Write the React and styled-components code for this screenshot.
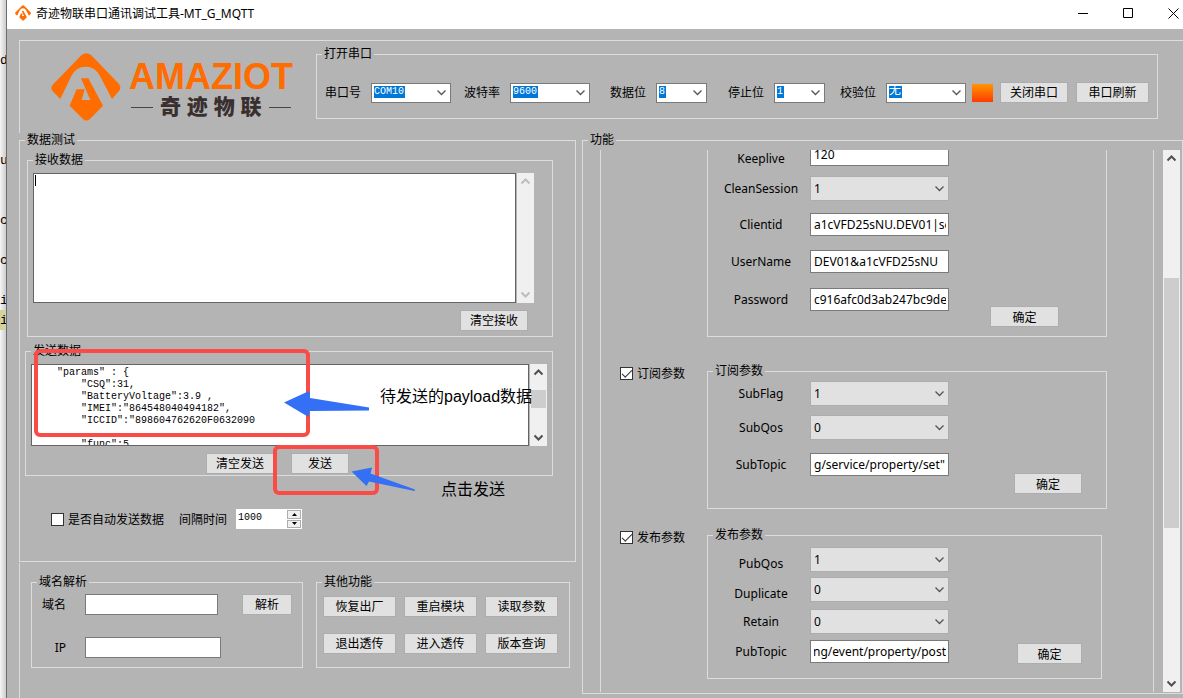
import React, { useEffect, useRef, useState } from "react";
import styled, { createGlobalStyle } from "styled-components";

const portFields = [
  { id: "com", label: "串口号", value: "COM10", width: 80, mark: 31, gap: 0 },
  { id: "baud", label: "波特率", value: "9600", width: 80, mark: 25, gap: 13 },
  { id: "bits", label: "数据位", value: "8", width: 51, mark: 7, gap: 20 },
  { id: "stop", label: "停止位", value: "1", width: 51, mark: 7, gap: 21 },
  { id: "parity", label: "校验位", value: "无", width: 80, mark: 13, gap: 15, size: 12 },
];

const otherButtons = ["恢复出厂", "重启模块", "读取参数", "退出透传", "进入透传", "版本查询"];

const mqttRows = [
  { label: "Keeplive", value: "120", gap: 0, low: true },
  { label: "CleanSession", value: "1", select: true, gap: 10 },
  { label: "Clientid", value: "a1cVFD25sNU.DEV01|se", gap: 12 },
  { label: "UserName", value: "DEV01&a1cVFD25sNU", gap: 14 },
  { label: "Password", value: "c916afc0d3ab247bc9de", gap: 15 },
];

const subRows = [
  { label: "SubFlag", value: "1", select: true, gap: 2 },
  { label: "SubQos", value: "0", select: true, gap: 9 },
  { label: "SubTopic", value: 'g/service/property/set"', end: true, gap: 13 },
];

const pubRows = [
  { label: "PubQos", value: "1", select: true, gap: 4, low: true },
  { label: "Duplicate", value: "0", select: true, gap: 5, low: true },
  { label: "Retain", value: "0", select: true, gap: 7 },
  { label: "PubTopic", value: "ng/event/property/post", end: true, gap: 6 },
];

const payload = `    "params" : {
        "CSQ":31,
        "BatteryVoltage":3.9 ,
        "IMEI":"864548040494182",
        "ICCID":"898604762620F0632090

        "func":5`;

//창 뒤에 보이는 에디터 글자
const editorLines = ["d", "", "", "", "", "u", "", "", "c", "", "c", "", "i", "i"];

function Mark({ size }) {
  return (
    <svg width={size} height={size} viewBox="152 156 210 206" fill="#ff6c00" aria-hidden="true">
      <path d="M244 163Q258 153 272 163L356 250Q364 262 356 271L335 295L299 226Q285 198 256 198Q227 198 213 226L180 295L157 272Q149 262 157 252Z" />
      <path d="M242 233H264L308 315L269 355Q258 364 248 355L208 315L229 266H253L244 298H270Z" />
    </svg>
  );
}

function Chevron({ up, size = 11, color = "#555", width = 1.3 }) {
  return (
    <svg width={size} height={size} viewBox="0 0 11 11" fill="none" stroke={color} strokeWidth={width} aria-hidden="true">
      <path d={up ? "M1.5 7.5L5.5 3.5L9.5 7.5" : "M1.5 3.5L5.5 7.5L9.5 3.5"} />
    </svg>
  );
}

function ScrollBar({ before, thumb, disabled }) {
  const color = disabled ? "#bdbdbd" : "#505050";
  return (
    <Track>
      <Chevron up color={color} width={2} />
      {thumb && <Thumb $top={before} $height={thumb} />}
      <Chevron color={color} width={2} />
    </Track>
  );
}

function Row({ row }) {
  const id = `f-${row.label}`;
  const ref = useRef(null);
  const [value, setValue] = useState(row.value);

  //긴 토픽은 끝부분이 보이게
  useEffect(() => {
    if (row.end && ref.current) {
      ref.current.scrollLeft = ref.current.scrollWidth;
    }
  }, [row.end]);

  return (
    <FieldRow $gap={row.gap} $low={row.low}>
      <label htmlFor={id}>{row.label}</label>
      {row.select ? (
        <SelectWrap>
          <GraySelect id={id} value={value} onChange={(e) => setValue(e.target.value)}>
            <option>0</option>
            <option>1</option>
          </GraySelect>
          <Chevron />
        </SelectWrap>
      ) : (
        <ParamInput id={id} ref={ref} value={value} onChange={(e) => setValue(e.target.value)} />
      )}
    </FieldRow>
  );
}

function App() {
  const [send, setSend] = useState(payload);
  const [receive, setReceive] = useState("");
  const [time, setTime] = useState(1000);

  return (
    <Screen>
      <GlobalStyle />
      <Editor aria-hidden="true">
        {editorLines.map((line, i) => (
          <EditorLine key={i} $on={i === editorLines.length - 1}>
            {line}
          </EditorLine>
        ))}
      </Editor>
      <Window>
        <TitleBar>
          <Mark size={16} />
          <h1>奇迹物联串口通讯调试工具-MT_G_MQTT</h1>
          <WinButton aria-label="minimize">
            <svg width="11" height="11" viewBox="0 0 11 11" stroke="#000"><path d="M0 5.5H10" /></svg>
          </WinButton>
          <WinButton aria-label="maximize">
            <svg width="11" height="11" viewBox="0 0 11 11" stroke="#000" fill="none"><path d="M.5 .5H9.5V9.5H.5Z" /></svg>
          </WinButton>
          <WinButton aria-label="close">
            <svg width="11" height="11" viewBox="0 0 11 11" stroke="#000"><path d="M.5 .5L10.5 10.5M10.5 .5L.5 10.5" /></svg>
          </WinButton>
        </TitleBar>
        <Client>
          <Header>
            <Logo>
              <Mark size={70} />
              <div>
                <Brand>AMAZIOT</Brand>
                <BrandSub>奇 迹 物 联</BrandSub>
              </div>
            </Logo>
            <PortGroup>
              <legend>打开串口</legend>
              <PortRow>
                {portFields.map((f) => (
                  <PortField key={f.id} $gap={f.gap}>
                    <label htmlFor={f.id}>{f.label}</label>
                    <SelectWrap>
                      <PortSelect id={f.id} $width={f.width} $mark={f.mark} $size={f.size}>
                        <option>{f.value}</option>
                      </PortSelect>
                      <Chevron />
                    </SelectWrap>
                  </PortField>
                ))}
                <Led />
                <Button $width={68}>关闭串口</Button>
                <Button $width={73}>串口刷新</Button>
              </PortRow>
            </PortGroup>
          </Header>

          <Body>
            <Left>
              <DataGroup>
                <legend>数据测试</legend>
                <ReceiveGroup>
                  <legend>接收数据</legend>
                  <AreaRow $right={18}>
                    <ReceiveArea
                      aria-label="接收数据"
                      value={receive}
                      onChange={(e) => setReceive(e.target.value)}
                    />
                    <Caret />
                    <ScrollBar disabled />
                  </AreaRow>
                  <ReceiveButtons>
                    <Button $width={68} onClick={() => setReceive("")}>清空接收</Button>
                  </ReceiveButtons>
                </ReceiveGroup>
                <SendGroup>
                  <legend>发送数据</legend>
                  <AreaRow $right={5}>
                    <SendArea
                      aria-label="发送数据"
                      wrap="off"
                      value={send}
                      onChange={(e) => setSend(e.target.value)}
                    />
                    <ScrollBar before={12} thumb={18} />
                  </AreaRow>
                  <SendButtons>
                    <Button $width={68} onClick={() => setSend("")}>清空发送</Button>
                    <Button $width={58}>发送</Button>
                  </SendButtons>
                </SendGroup>
                <AutoRow>
                  <Check>
                    <input type="checkbox" />
                    是否自动发送数据
                  </Check>
                  <label htmlFor="time">间隔时间</label>
                  <Spinner>
                    <input id="time" value={time} onChange={(e) => setTime(Number(e.target.value) || 0)} />
                    <div>
                      <button aria-label="up" onClick={() => setTime(time + 1)}>
                        <svg width="5" height="3" viewBox="0 0 5 3"><path d="M0 3L2.500 0L5 3Z" /></svg>
                      </button>
                      <button aria-label="down" onClick={() => setTime(time - 1)}>
                        <svg width="5" height="3" viewBox="0 0 5 3"><path d="M0 0L2.500 3L5 0Z" /></svg>
                      </button>
                    </div>
                  </Spinner>
                </AutoRow>
              </DataGroup>

              <Bottom>
                <DomainGroup>
                  <legend>域名解析</legend>
                  <DomainRow>
                    <label htmlFor="domain">域名</label>
                    <TextInput id="domain" $width={133} />
                    <Button $width={50}>解析</Button>
                  </DomainRow>
                  <DomainRow>
                    <label htmlFor="ip">IP</label>
                    <TextInput id="ip" $width={136} />
                  </DomainRow>
                </DomainGroup>
                <OtherGroup>
                  <legend>其他功能</legend>
                  <ButtonGrid>
                    {otherButtons.map((b) => (
                      <Button key={b} $width={73}>{b}</Button>
                    ))}
                  </ButtonGrid>
                </OtherGroup>
              </Bottom>
            </Left>

            <FuncGroup>
              <legend>功能</legend>
              <Viewport>
                <Panel>
                  <Section $right={46}>
                    <Side />
                    <MqttGroup>
                      <div>{mqttRows.map((r) => <Row key={r.label} row={r} />)}</div>
                      <Confirm $width={69} $right={47} $bottom={9}>确定</Confirm>
                    </MqttGroup>
                  </Section>
                  <Section $top={27} $right={46}>
                    <Side>
                      <Check>
                        <input type="checkbox" defaultChecked />
                        订阅参数
                      </Check>
                    </Side>
                    <ParamGroup>
                      <legend>订阅参数</legend>
                      <ParamBody $bottom={32}>
                        <div>{subRows.map((r) => <Row key={r.label} row={r} />)}</div>
                        <Confirm $width={68} $right={24} $bottom={14}>确定</Confirm>
                      </ParamBody>
                    </ParamGroup>
                  </Section>
                  <Section $top={19} $right={51}>
                    <Side>
                      <Check>
                        <input type="checkbox" defaultChecked />
                        发布参数
                      </Check>
                    </Side>
                    <ParamGroup>
                      <legend>发布参数</legend>
                      <ParamBody $bottom={15}>
                        <div>{pubRows.map((r) => <Row key={r.label} row={r} />)}</div>
                        <Confirm $width={65} $right={19} $bottom={14}>确定</Confirm>
                      </ParamBody>
                    </ParamGroup>
                  </Section>
                </Panel>
                <ScrollBar before={114} thumb={250} />
              </Viewport>
            </FuncGroup>
          </Body>
        </Client>
      </Window>

      {/*설명용 표시*/}
      <RedBox $x={34} $y={349} $w={276} $h={88} />
      <RedBox $x={273} $y={445} $w={106} $h={50} />
      <Arrows width="140" height="110" viewBox="280 385 140 110" fill="#3370f5" aria-hidden="true">
        <path d="M284 402.500L308 391.500Q310 391 310 393V398L369 407.500V410.500L310 411L308.500 417Z" />
        <path d="M351.500 471.500L372 467.500L370.500 473.500L415 489.500L414.500 491L369 481.500L366.500 486Z" />
      </Arrows>
      <Note $x={380} $y={387}>待发送的payload数据</Note>
      <Note $x={441} $y={480}>点击发送</Note>
    </Screen>
  );
}

const GlobalStyle = createGlobalStyle`
  * {
    box-sizing: border-box;
  }
  body {
    margin: 0;
    background: #b4b4b4;
    font-family: "Noto Sans", "Noto Sans CJK SC", sans-serif;
    font-size: 12px;
    line-height: 15px;
    color: #000;
  }
  input, select, textarea, button {
    font: inherit;
    color: inherit;
    border-radius: 0;
    margin: 0;
    outline: none;
  }
  svg {
    display: block;
    flex: none;
  }
`;

const Screen = styled.div`
  position: relative;
  display: flex;
  min-height: 100vh;
  overflow: hidden;
`;
const Editor = styled.div`
  width: 7px;
  flex: none;
  padding-top: 50px;
  overflow: hidden;
  background: linear-gradient(90deg, #f6f6f6, #cccccc);
  border-right: 1px solid #6e6e6e;
`;
const EditorLine = styled.div`
  height: 20px;
  line-height: 22px;
  font-family: "Liberation Mono", monospace;
  font-size: 13px;
  background: ${(props) => (props.$on ? "#d3d3a0" : "transparent")};
`;
const Window = styled.div`
  flex: 1;
  min-width: 0;
  display: flex;
  flex-direction: column;
`;
const TitleBar = styled.header`
  display: flex;
  align-items: center;
  height: 29px;
  padding: 0 4px 3px 8px;
  background: #fff;
  h1 {
    flex: 1;
    margin: 0 0 0 5px;
    font-size: 12px;
    font-weight: 400;
  }
`;
const WinButton = styled.button`
  width: 11px;
  padding: 0;
  border: none;
  background: none;
  & + & {
    margin-left: 34px;
  }
`;
const Client = styled.main`
  flex: 1;
  display: flex;
  flex-direction: column;
  margin: 11px 0 0 12px;
  border-top: 1px solid #dcdcdc;
`;
const Header = styled.div`
  display: flex;
  align-items: flex-start;
  height: 92px;
  border-left: 1px solid #dcdcdc;
`;
const Logo = styled.div`
  display: flex;
  width: 296px;
  padding: 11px 0 0 31px;
  gap: 8px;
`;
const Brand = styled.div`
  margin-top: 9px;
  font-family: "Liberation Sans", sans-serif;
  font-weight: 700;
  font-size: 36px;
  line-height: 32px;
  color: #ff6c00;
`;
const BrandSub = styled.div`
  display: flex;
  align-items: center;
  gap: 7px;
  padding: 1px 0 0 2px;
  font-family: "Liberation Sans", "Noto Sans CJK SC", sans-serif;
  font-weight: 900;
  font-size: 21px;
  line-height: 26px;
  white-space: nowrap;
  color: #3a2f2f;
  &::before,
  &::after {
    content: "";
    width: 22px;
    height: 1px;
    background: #4d4545;
  }
`;
const Group = styled.fieldset`
  min-width: 0;
  margin: 0;
  padding: 0;
  border: 1px solid #dcdcdc;
  legend {
    margin-left: 5px;
    padding: 0 2px;
    height: 15px;
    line-height: 13px;
  }
`;
const PortGroup = styled(Group)`
  flex: 1;
  height: 72px;
  margin: 6px 25px 0 0;
`;
const PortRow = styled.div`
  display: flex;
  align-items: center;
  padding: 20px 8px 0;
`;
const PortField = styled.div`
  display: flex;
  align-items: center;
  margin-left: ${(props) => props.$gap}px;
  gap: 10px;
  label {
    width: 36px;
    white-space: nowrap;
  }
`;
const SelectWrap = styled.div`
  display: grid;
  align-items: center;
  > * {
    grid-area: 1 / 1;
  }
  svg {
    justify-self: end;
    margin-right: 4px;
    pointer-events: none;
  }
`;
const PortSelect = styled.select`
  appearance: none;
  width: ${(props) => props.$width}px;
  height: 20px;
  padding: 0 0 2px 2px;
  border: 1px solid #7a7a7a;
  background: #fff linear-gradient(#0078d7, #0078d7) 2px 2px / ${(props) => props.$mark}px 12px no-repeat;
  color: #fff;
  font-family: "Liberation Mono", "Noto Sans CJK SC", monospace;
  font-size: ${(props) => props.$size || 10}px;
`;
const Led = styled.span`
  width: 21px;
  height: 18px;
  margin: 0 -1px 0 6px;
  background: linear-gradient(#ff9500, #ff3c00);
`;
const Button = styled.button`
  width: ${(props) => props.$width}px;
  height: 21px;
  padding: 0;
  border: 1px solid #adadad;
  background: #e1e1e1;
  line-height: 17px;
  white-space: nowrap;
  ${PortRow} & {
    margin-left: 8px;
  }
`;
const Body = styled.div`
  flex: 1;
  display: flex;
  gap: 6px;
`;
const Left = styled.div`
  width: 557px;
  flex: none;
  display: flex;
  flex-direction: column;
`;
const DataGroup = styled(Group)`
  height: 429px;
`;
const ReceiveGroup = styled(Group)`
  height: 184px;
  margin: 5px 22px 0 7px;
`;
const AreaRow = styled.div`
  position: relative;
  display: flex;
  gap: 1px;
  margin: 5px ${(props) => props.$right}px 0 5px;
`;
const Area = styled.textarea`
  flex: 1;
  min-width: 0;
  padding: 2px 1px 0;
  border: 1px solid #646464;
  background: #fff;
  resize: none;
  overflow: hidden;
  font-family: "Liberation Mono", monospace;
  font-size: 10px;
  line-height: 12px;
`;
const ReceiveArea = styled(Area)`
  height: 130px;
`;
const SendArea = styled(Area)`
  height: 82px;
`;
const Caret = styled.span`
  position: absolute;
  left: 2px;
  top: 2px;
  width: 1px;
  height: 11px;
  background: #000;
`;
const Track = styled.div`
  width: 17px;
  flex: none;
  display: flex;
  flex-direction: column;
  align-items: center;
  padding: 3px 0;
  background: #f0f0f0;
  svg:last-child {
    margin-top: auto;
  }
`;
const Thumb = styled.div`
  width: 15px;
  height: ${(props) => props.$height}px;
  margin-top: ${(props) => props.$top}px;
  flex: none;
  background: #cdcdcd;
`;
const ReceiveButtons = styled.div`
  display: flex;
  justify-content: flex-end;
  padding: 7px 24px 0 0;
`;
const SendGroup = styled(Group)`
  height: 132px;
  margin: 7px 22px 0 5px;
`;
const SendButtons = styled.div`
  display: flex;
  gap: 17px;
  padding: 7px 0 0 180px;
`;
const AutoRow = styled.div`
  display: flex;
  align-items: center;
  padding: 33px 0 0 31px;
  > label + label {
    margin: 0 9px 0 15px;
  }
`;
const Check = styled.label`
  display: flex;
  align-items: center;
  gap: 4px;
  white-space: nowrap;
  input {
    appearance: none;
    display: grid;
    place-items: center;
    width: 13px;
    height: 13px;
    border: 1px solid #333;
    background: #fff;
  }
  input:checked::before {
    content: "";
    width: 9px;
    height: 4px;
    margin-bottom: 3px;
    border: solid #333;
    border-width: 0 0 1px 1px;
    transform: rotate(-45deg);
  }
`;
const Spinner = styled.div`
  display: flex;
  width: 66px;
  height: 20px;
  background: #fff;
  input {
    flex: 1;
    min-width: 0;
    border: none;
    padding: 0 0 3px 2px;
    background: none;
    font-family: "Liberation Mono", monospace;
    font-size: 10px;
  }
  div {
    display: grid;
    grid-template-rows: 1fr 1fr;
    gap: 1px;
    width: 15px;
    padding: 1px 1px 1px 0;
  }
  button {
    display: grid;
    place-items: center;
    padding: 0;
    border: 1px solid #adadad;
    background: #f0f0f0;
  }
`;
const Bottom = styled.div`
  flex: 1;
  display: flex;
  align-items: flex-start;
  gap: 13px;
  margin-top: 1px;
  padding: 12px 6px 0 11px;
  border-left: 1px solid #dcdcdc;
`;
const DomainGroup = styled(Group)`
  width: 272px;
  height: 93px;
`;
const DomainRow = styled.div`
  display: flex;
  align-items: center;
  margin: 4px 10px 0 10px;
  label {
    width: 24px;
    margin-right: 19px;
    text-align: right;
  }
  button {
    margin-left: auto;
  }
  & + & {
    margin-top: 22px;
  }
`;
const TextInput = styled.input`
  width: ${(props) => props.$width}px;
  height: 21px;
  border: 1px solid #7a7a7a;
  background: #fff;
`;
const OtherGroup = styled(Group)`
  flex: 1;
  height: 93px;
`;
const ButtonGrid = styled.div`
  display: grid;
  grid-template-columns: repeat(3, max-content);
  gap: 16px 8px;
  padding: 6px 6px 0;
`;
const FuncGroup = styled(Group)`
  flex: 1;
  height: 561px;
`;
const Viewport = styled.div`
  display: flex;
  gap: 9px;
  height: 542px;
  margin: 2px 2px 0 17px;
  overflow: hidden;
`;
const Panel = styled.div`
  flex: 1;
  border: solid #dcdcdc;
  border-width: 0 1px;
`;
const Section = styled.section`
  display: flex;
  margin: ${(props) => props.$top || 0}px ${(props) => props.$right}px 0 0;
`;
const Side = styled.div`
  width: 106px;
  flex: none;
  padding: 2px 0 0 19px;
`;
const MqttGroup = styled.div`
  flex: 1;
  display: flex;
  margin-top: -7px;
  height: 194px;
  border: solid #dcdcdc;
  border-width: 0 1px 1px;
`;
const ParamGroup = styled(Group)`
  flex: 1;
`;
const ParamBody = styled.div`
  display: flex;
  > div {
    padding-bottom: ${(props) => props.$bottom}px;
  }
`;
const Confirm = styled(Button)`
  align-self: flex-end;
  margin: 0 ${(props) => props.$right}px ${(props) => props.$bottom}px auto;
  padding-top: 2px;
`;
const FieldRow = styled.div`
  display: flex;
  align-items: center;
  margin-top: ${(props) => props.$gap}px;
  label {
    width: 102px;
    padding: ${(props) => (props.$low ? 8 : 0)}px 0 0 4px;
    text-align: center;
  }
`;
const ParamInput = styled.input`
  width: 139px;
  height: 23px;
  padding: 0 2px 0 3px;
  border: 1px solid #7a7a7a;
  background: #fff;
`;
const GraySelect = styled.select`
  appearance: none;
  width: 139px;
  height: 25px;
  padding: 0 3px;
  border: 1px solid #adadad;
  background: #e1e1e1;
`;
const RedBox = styled.div`
  position: absolute;
  left: ${(props) => props.$x}px;
  top: ${(props) => props.$y}px;
  width: ${(props) => props.$w}px;
  height: ${(props) => props.$h}px;
  border: 4px solid #fa4b46;
  border-radius: 6px;
  pointer-events: none;
`;
const Arrows = styled.svg`
  position: absolute;
  left: 280px;
  top: 385px;
  pointer-events: none;
`;
const Note = styled.p`
  position: absolute;
  left: ${(props) => props.$x}px;
  top: ${(props) => props.$y}px;
  margin: 0;
  font-family: "Liberation Sans", "Noto Sans CJK SC", sans-serif;
  font-size: 16px;
  line-height: 20px;
  white-space: nowrap;
  pointer-events: none;
`;

export default App;
